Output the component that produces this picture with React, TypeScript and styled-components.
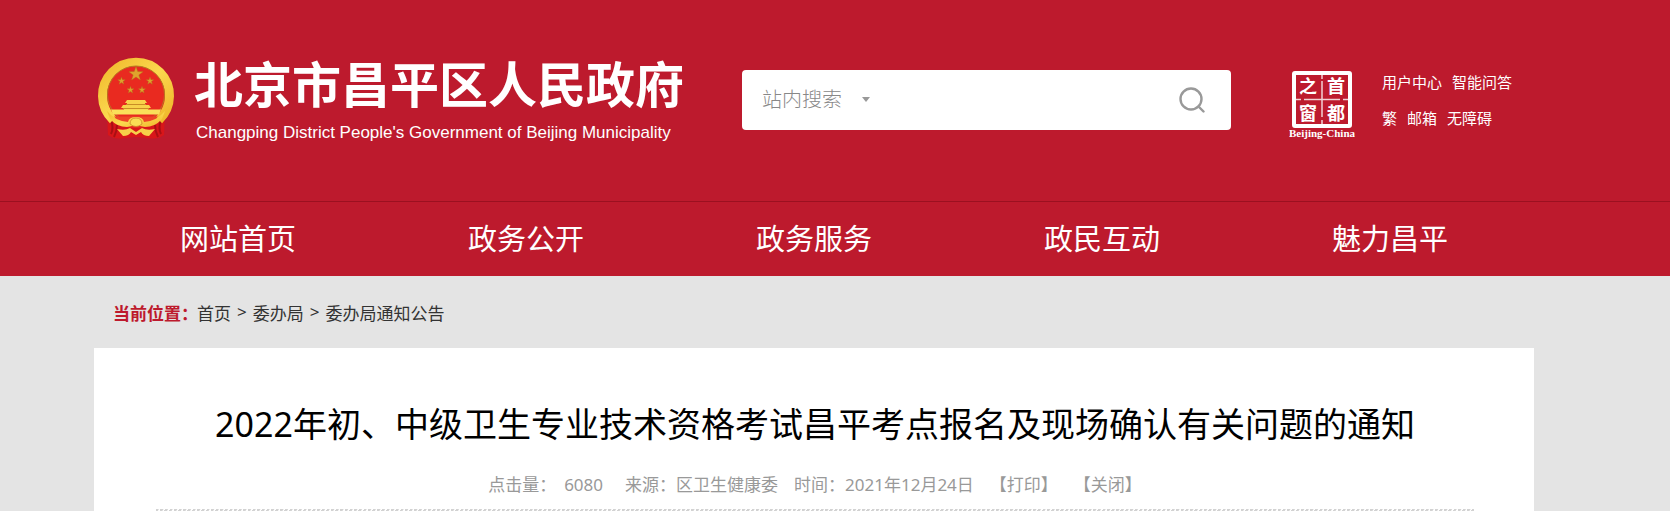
import React from "react";
import styled, { createGlobalStyle } from "styled-components";

const sans = `"Noto Sans", "Noto Sans CJK SC", sans-serif`;
const red = "#bd1a2d";

const GlobalStyle = createGlobalStyle`
  * { box-sizing: border-box; }
  body { margin: 0; background: #e4e4e4; font-family: ${sans}; font-size: 17px; color: #333; }
  a { color: inherit; text-decoration: none; }
  h1, p, ul, ol { margin: 0; padding: 0; font-weight: 400; list-style: none; }
`;

const Band = styled.div`
  padding-right: 42px;
`;

const Container = styled.div`
  max-width: 1440px;
  margin: 0 auto;
`;

const Header = styled.header`
  background: ${red};
  color: #fff;
`;

const HeaderRow = styled(Container)`
  display: flex;
  align-items: center;
  height: 201px;
  padding-bottom: 2px;
`;

const Brand = styled.a`
  display: flex;
  align-items: center;
  gap: 19px;
  width: 648px;
  padding: 0 0 4px 3px;
`;

const BrandText = styled.div`
  padding-top: 7px;
  white-space: nowrap;
`;

const BrandName = styled.p`
  font-family: "Noto Sans CJK SC", sans-serif;
  && { font-weight: 700; }
  font-size: 49px;
  line-height: 56px;
`;

const BrandEnglish = styled.p`
  && { margin-top: 7px; padding-left: 2px; }
  font-family: "Liberation Sans", sans-serif;
  font-size: 17px;
  line-height: 32px;
`;

const SearchForm = styled.form`
  display: flex;
  align-items: center;
  width: 489px;
  height: 60px;
  padding: 0 20px;
  border-radius: 4px;
  background: #fff;
  color: #999;
`;

const ScopeField = styled.div`
  display: grid;
  grid-template-columns: 100px 8px;
  align-items: center;
`;

const ScopeSelect = styled.select`
  grid-area: 1 / 1 / 2 / 3;
  appearance: none;
  border: 0;
  padding: 0 0 2px;
  background: transparent;
  color: #888;
  font-family: "Noto Sans CJK SC", sans-serif;
  font-weight: 300;
  font-size: 20px;
  line-height: 30px;
`;

const Caret = styled.svg`
  grid-area: 1 / 2;
  pointer-events: none;
`;

const SearchInput = styled.input`
  flex: 1;
  min-width: 0;
  height: 40px;
  border: 0;
  outline: 0;
  background: transparent;
  font-size: 17px;
`;

const SearchButton = styled.button`
  display: flex;
  padding: 6px;
  border: 0;
  background: transparent;
  color: #999;
`;

const Tools = styled.div`
  display: flex;
  align-items: center;
  gap: 27px;
  margin-left: 58px;
`;

const ToolLinks = styled.ul`
  display: grid;
  gap: 12px;
  font-size: 15px;
  line-height: 24px;
  white-space: nowrap;
`;

const ToolRow = styled.li`
  display: flex;
  gap: 10px;
`;

const Nav = styled.nav`
  border-top: 1px solid #9b1020;
`;

const NavList = styled.ul`
  display: grid;
  grid-template-columns: repeat(5, 1fr);
  && { padding-bottom: 4px; }
  font-family: "Noto Sans CJK SC", sans-serif;
  font-size: 29px;
  line-height: 70px;
  text-align: center;
`;

const Breadcrumb = styled.nav`
  display: flex;
  align-items: center;
  gap: 8px;
  height: 72px;
  padding-left: 19px;
`;

const BreadcrumbList = styled.ol`
  display: flex;
  gap: 6px;
`;

const BreadcrumbLabel = styled.strong`
  color: ${red};
  font-weight: 700;
  width: 76px;
  white-space: nowrap;
`;

const Article = styled.article`
  padding: 49px 60px 0 62px;
  background: #fff;
  text-align: center;
`;

const Title = styled.h1`
  color: #000;
  font-size: 34px;
  line-height: 54px;
`;

const Meta = styled.div`
  display: flex;
  justify-content: center;
  padding: 20px 0 10px;
  color: #999;
  line-height: 28px;
  white-space: pre;
`;

const MetaItem = styled.span<{ $gap: number }>`
  margin-right: ${(p) => p.$gap}px;
`;

const Divider = styled.hr`
  height: 2px;
  margin: 0;
  border: 0;
  background: repeating-linear-gradient(120deg, #d2d2d2 0 2px, #fff 3px 4px);
`;

const starPoints = (cx: number, cy: number, r: number) =>
  Array.from({ length: 10 }, (_, i) => {
    const a = (Math.PI / 5) * i - Math.PI / 2;
    const d = i % 2 ? r * 0.4 : r;
    return `${(cx + d * Math.cos(a)).toFixed(2)},${(cy + d * Math.sin(a)).toFixed(2)}`;
  }).join(" ");

const Emblem = () => (
  <svg width="78" height="84" viewBox="0 0 78 84" aria-hidden="true">
    <defs>
      <linearGradient id="gold" x1="0" y1="0" x2="1" y2="1">
        <stop offset="0" stopColor="#f0b92c" />
        <stop offset=".5" stopColor="#fbd84e" />
        <stop offset="1" stopColor="#efb52a" />
      </linearGradient>
    </defs>
    <path d="M10 56l1 23q7 5 16 3l11-1 13 1q9 2 16-3l1-23z" fill="#d8161a" />
    <path d="M14 64q3 8 0 14M20 69q0 6-3 12M64 64q-3 8 0 14M58 69q0 6 3 12" stroke="#a90f13" strokeWidth="2" fill="none" />
    <circle cx="39" cy="39" r="33" fill="#e92a20" />
    <path d="M16 64A33.500 33.500 0 1 1 62 64" fill="none" stroke="url(#gold)" strokeWidth="9" />
    <circle cx="39" cy="38.500" r="28.500" fill="#e92a20" stroke="#b67a20" strokeWidth="1" />
    {[[39, 18, 7.5], [24.5, 25, 4], [53, 25, 4], [33.5, 34, 3.7], [45, 34, 3.7]].map(([x, y, r]) => (
      <polygon key={`${x}-${y}`} points={starPoints(x, y, r)} fill="#dfa32d" stroke="#b1701d" strokeWidth=".4" />
    ))}
    <path d="M30 44h18l2 3h-2v2h4l2 3h-3v3H27v-3h-3l2-3h4v-2h-2z" fill="#f8d24a" />
    <path d="M29 48.500h20M26 52.500h26" stroke="#c98d25" strokeWidth="1" />
    <path d="M14 53.500h50l-2 5H16z" fill="#fae05a" />
    <path d="M17 60.500h44l-5 6H22z" fill="#ee4527" />
    <path d="M10 55q8 10 21 11q1-5 8-5t8 5q13-1 21-11l-3 8q-7 8-17 8q-4 0-9-3q-5 3-9 3q-10 0-17-8z" fill="url(#gold)" />
    <path d="M33 68q0-6 6-6t6 6q-6 5-12 0z" fill="#fadd55" stroke="#c8882a" strokeWidth=".8" />
    <path d="M20 73q8 2 13-1l6 4 6-4q5 3 13 1l-6 7q-6 0-8-4l-5 3-5-3q-2 4-8 4z" fill="#f7cf49" />
  </svg>
);

const Seal = () => (
  <svg width="66" height="80" viewBox="0 -10 66 80" aria-label="首都之窗">
    <rect x="5" y="3" width="56" height="53" rx="1" fill="none" stroke="#fff" strokeWidth="4" />
    <path d="M33 5v4M33 11v36M33 50v4M7 29.500h5M15 29.500h36M54 29.500h5" stroke="#fff" strokeWidth="1.500" opacity=".8" />
    <g fill="#fff" fontFamily="'Noto Sans CJK SC', sans-serif" fontWeight="700" fontSize="18" textAnchor="middle">
      <text x="19" y="23">之</text>
      <text x="47" y="23">首</text>
      <text x="19" y="50">窗</text>
      <text x="47" y="50">都</text>
    </g>
    <text x="33" y="67" fill="#fff" fontFamily="'Liberation Serif', serif" fontWeight="700" fontSize="11" textAnchor="middle">
      Beijing-China
    </text>
  </svg>
);

const toolLinks = [["用户中心", "智能问答"], ["繁", "邮箱", "无障碍"]];
const navItems = ["网站首页", "政务公开", "政务服务", "政民互动", "魅力昌平"];
const trail = ["首页", "委办局", "委办局通知公告"];

export default function App() {
  return (
    <>
      <GlobalStyle />
      <Header>
        <Band>
          <HeaderRow>
            <Brand href="#">
              <Emblem />
              <BrandText>
                <BrandName>北京市昌平区人民政府</BrandName>
                <BrandEnglish>Changping District People's Government of Beijing Municipality</BrandEnglish>
              </BrandText>
            </Brand>
            <SearchForm>
              <ScopeField>
                <ScopeSelect aria-label="搜索范围">
                  <option>站内搜索</option>
                </ScopeSelect>
                <Caret width="8" height="5" viewBox="0 0 8 5">
                  <path d="M0 0h8L4 5z" fill="#999" />
                </Caret>
              </ScopeField>
              <SearchInput aria-label="搜索" />
              <SearchButton type="button" aria-label="搜索">
                <svg width="26" height="26" viewBox="0 0 26 26" fill="none" stroke="currentColor" strokeWidth="2.400" strokeLinecap="round">
                  <circle cx="12" cy="12" r="10.500" />
                  <path d="M19.500 19.500l5 5" />
                </svg>
              </SearchButton>
            </SearchForm>
            <Tools>
              <Seal />
              <ToolLinks>
                {toolLinks.map((row) => (
                  <ToolRow key={row[0]}>
                    {row.map((label) => (
                      <a href="#" key={label}>{label}</a>
                    ))}
                  </ToolRow>
                ))}
              </ToolLinks>
            </Tools>
          </HeaderRow>
        </Band>
        <Nav>
          <Band>
            <Container>
              <NavList>
                {navItems.map((label) => (
                  <li key={label}><a href="#">{label}</a></li>
                ))}
              </NavList>
            </Container>
          </Band>
        </Nav>
      </Header>
      <Band>
        <Container>
          <Breadcrumb>
            <BreadcrumbLabel>当前位置：</BreadcrumbLabel>
            <BreadcrumbList>
              {trail.map((label, i) => (
                <React.Fragment key={label}>
                  {i > 0 && <li aria-hidden="true">&gt;</li>}
                  <li><a href="#">{label}</a></li>
                </React.Fragment>
              ))}
            </BreadcrumbList>
          </Breadcrumb>
          <Article>
            <Title>2022年初、中级卫生专业技术资格考试昌平考点报名及现场确认有关问题的通知</Title>
            <Meta>
              <MetaItem $gap={8}>点击量：</MetaItem>
              <MetaItem $gap={22}>6080</MetaItem>
              <MetaItem $gap={16}>来源：区卫生健康委</MetaItem>
              <MetaItem $gap={16}>时间：2021年12月24日</MetaItem>
              <MetaItem $gap={16}><a href="#">【打印】</a></MetaItem>
              <MetaItem $gap={0}><a href="#">【关闭】</a></MetaItem>
            </Meta>
            <Divider />
          </Article>
        </Container>
      </Band>
    </>
  );
}
